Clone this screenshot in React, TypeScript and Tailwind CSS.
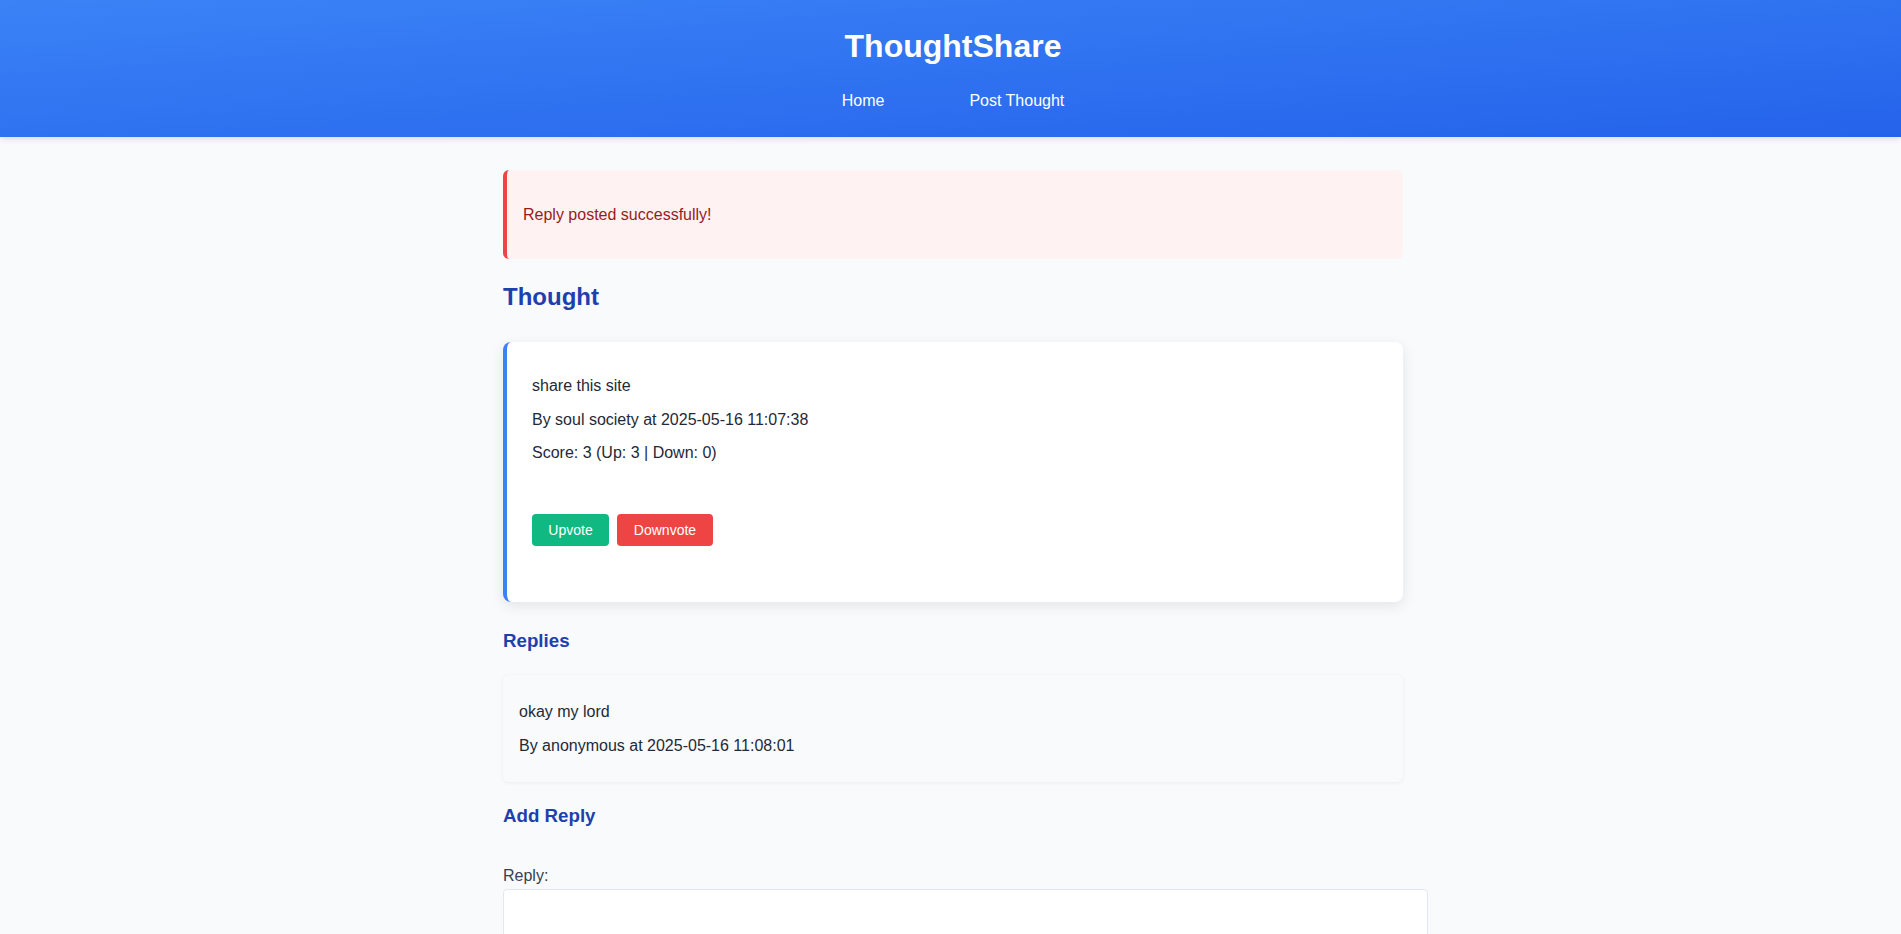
export default function App() {
  return (
    <div className="min-h-screen bg-[#f8fafc] font-['Liberation_Sans',Arial,sans-serif] text-[#1f2937]">
      <header className="h-[137px] bg-gradient-to-br from-[#3b82f6] to-[#2563eb] shadow-[0_2px_6px_rgba(0,0,0,0.12)] flex flex-col items-center pt-[27px] pl-[5px]">
        <h1 className="text-[32px] leading-[38px] font-bold text-white">ThoughtShare</h1>
        <nav className="mt-[27px] flex gap-[85px] text-base leading-[18px] text-white">
          <a href="#">Home</a>
          <a href="#">Post Thought</a>
        </nav>
      </header>

      <main className="w-[905px] mx-auto pl-[5px] pt-[33px] pb-10">
        <div className="bg-[#fef2f2] border-l-4 border-[#ef4444] rounded-md px-4 py-[35px] text-[#991b1b] leading-[19px]">
          Reply posted successfully!
        </div>

        <h2 className="mt-6 text-2xl leading-7 font-bold text-[#1e40af]">Thought</h2>

        <div className="mt-[31px] bg-white border-l-4 border-[#3b82f6] rounded-lg shadow-[0_4px_14px_rgba(0,0,0,0.09)] pl-[25px] pr-6 pt-[31px] pb-14">
          <p className="leading-[25.6px]">share this site</p>
          <p className="mt-2 leading-[25.6px]">By soul society at 2025-05-16 11:07:38</p>
          <p className="mt-2 leading-[25.6px]">Score: 3 (Up: 3 | Down: 0)</p>
          <div className="mt-12 flex gap-2">
            <button className="h-8 w-[77px] rounded bg-[#10b981] text-sm text-white">Upvote</button>
            <button className="h-8 w-[96px] rounded bg-[#ef4444] text-sm text-white">Downvote</button>
          </div>
        </div>

        <h3 className="mt-[27px] text-[18.72px] leading-6 font-bold text-[#1e40af]">Replies</h3>

        <div className="mt-[22px] bg-[#f9fafb] rounded-md shadow-[0_1px_4px_rgba(0,0,0,0.06)] px-4 pt-6 pb-[23px]">
          <p className="leading-[25.6px]">okay my lord</p>
          <p className="mt-[9px] leading-[25.6px]">By anonymous at 2025-05-16 11:08:01</p>
        </div>

        <h3 className="mt-[22px] text-[18.72px] leading-6 font-bold text-[#1e40af]">Add Reply</h3>

        <form className="mt-[39px]">
          <label className="block leading-[18px] text-[#374151]">Reply:</label>
          <textarea className="mt-1 block w-[925px] h-[120px] bg-white border border-[#e2e8f0] rounded px-3 py-2" />
        </form>
      </main>
    </div>
  );
}
